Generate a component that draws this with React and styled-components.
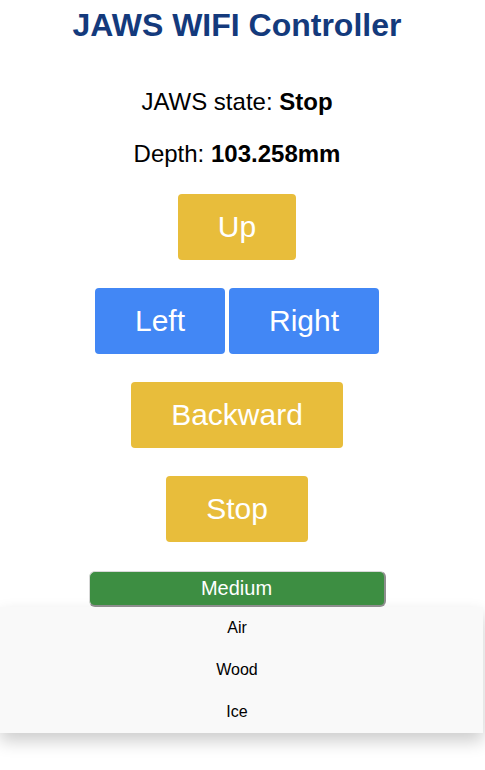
import React from "react";
import styled, { createGlobalStyle } from "styled-components";

const GlobalStyle = createGlobalStyle`
  html, body {
    margin: 0;
    padding: 0;
    background: #ffffff;
  }
  body {
    font-family: "Liberation Sans", Arial, sans-serif;
    color: #000;
  }
`;

const Page = styled.main`
  display: flex;
  flex-direction: column;
  align-items: center;
  text-align: center;
  width: 474px;
  padding-top: 7px;
  min-height: 770px;
  box-sizing: border-box;
`;

const Title = styled.h1`
  margin: 0;
  font-size: 32px;
  line-height: 37px;
  font-weight: 700;
  color: #143a7c;
`;

const InfoBlock = styled.section`
  display: flex;
  flex-direction: column;
  gap: 24px;
  margin-top: 44px;
`;

const InfoLine = styled.p`
  margin: 0;
  font-size: 24px;
  line-height: 28px;
`;

const Controls = styled.section`
  display: flex;
  flex-direction: column;
  align-items: center;
  gap: 28px;
  margin-top: 26px;
`;

const Row = styled.div`
  display: flex;
  gap: 4px;
`;

const ControlButton = styled.button`
  font-family: "Liberation Sans", Arial, sans-serif;
  font-size: 30px;
  line-height: 34px;
  padding: 16px 40px;
  border: none;
  border-radius: 4px;
  color: #ffffff;
  background: ${(p) => (p.$tone === "blue" ? "#4287f5" : "#e8bd3b")};
  cursor: pointer;
`;

const DropdownArea = styled.div`
  position: relative;
  align-self: stretch;
  display: flex;
  justify-content: center;
  margin-top: 29px;
`;

const DropButton = styled.button`
  position: relative;
  z-index: 2;
  width: 297px;
  height: 36px;
  box-sizing: border-box;
  font-family: "Liberation Sans", Arial, sans-serif;
  font-size: 20px;
  line-height: 23px;
  padding: 0;
  color: #ffffff;
  background: #3d8e42;
  border: 1px solid #d8d8d8;
  border-right: 2px solid #8e8e8e;
  border-bottom: 2px solid #8e8e8e;
  border-radius: 6px;
`;

const DropdownMenu = styled.div`
  position: absolute;
  top: 100%;
  left: 0;
  right: -9px;
  z-index: 1;
  background: #f9f9f9;
  box-shadow: 0 8px 16px 0 rgba(0, 0, 0, 0.2);
  display: flex;
  flex-direction: column;
`;

const MenuItem = styled.a`
  display: block;
  padding: 12px 25px 12px 16px;
  font-size: 16px;
  line-height: 18px;
  color: #000;
  text-decoration: none;
  text-align: center;
`;

export default function App() {
  return (
    <>
      <GlobalStyle />
      <Page>
        <Title>JAWS WIFI Controller</Title>
        <InfoBlock>
          <InfoLine>
            JAWS state: <b>Stop</b>
          </InfoLine>
          <InfoLine>
            Depth: <b>103.258mm</b>
          </InfoLine>
        </InfoBlock>
        <Controls>
          <ControlButton>Up</ControlButton>
          <Row>
            <ControlButton $tone="blue">Left</ControlButton>
            <ControlButton $tone="blue">Right</ControlButton>
          </Row>
          <ControlButton>Backward</ControlButton>
          <ControlButton>Stop</ControlButton>
        </Controls>
        <DropdownArea>
          <DropButton>Medium</DropButton>
          <DropdownMenu>
            <MenuItem>Air</MenuItem>
            <MenuItem>Wood</MenuItem>
            <MenuItem>Ice</MenuItem>
          </DropdownMenu>
        </DropdownArea>
      </Page>
    </>
  );
}
